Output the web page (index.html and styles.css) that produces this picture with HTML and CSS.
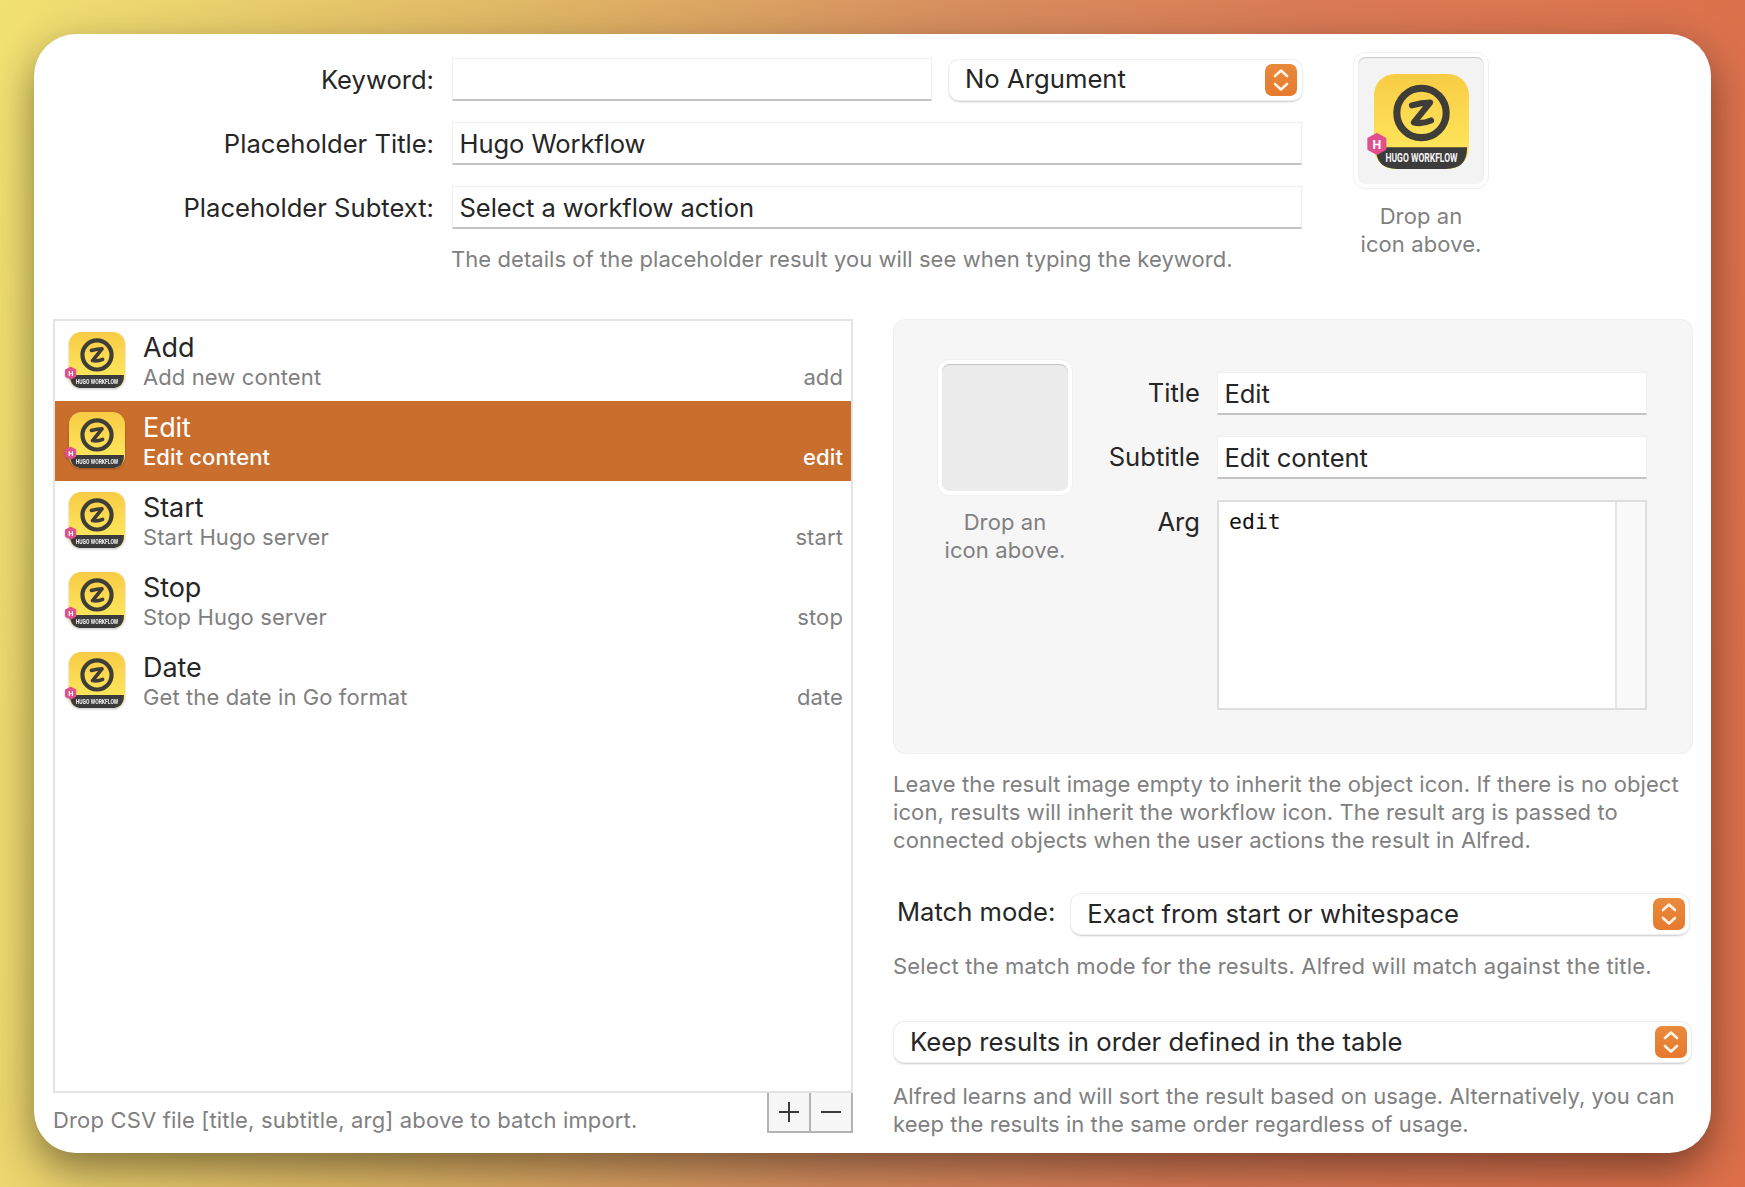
FILE: index.html
```html
<!DOCTYPE html>
<html lang="en">
<head>
    <meta charset="UTF-8">
    <title>Hugo Workflow - List Filter</title>
    <link rel="stylesheet" href="styles.css">
</head>
<body>
    <svg class="defs" width="0" height="0">
        <defs>
            <linearGradient id="iconYellow" x1="0" y1="0" x2="0" y2="1">
                <stop offset="0" stop-color="#f8cc45"/>
                <stop offset="1" stop-color="#ffec60"/>
            </linearGradient>
            <symbol id="appIcon" viewBox="0 0 100 100" overflow="visible">
                <rect x="0" y="0" width="100" height="100" rx="22" fill="url(#iconYellow)"/>
                <path d="M2 77H98V78Q98 100 76 100H24Q2 100 2 78Z" fill="#3d3c3c"/>
                <circle cx="50" cy="41" r="26" fill="none" stroke="#3f3d38" stroke-width="7.5"/>
                <path d="M40 33Q50 30 59 30L42 51Q51 53 60 49" fill="none" stroke="#3f3d38" stroke-width="6.500" stroke-linecap="round" stroke-linejoin="round"/>
                <text x="50" y="93" text-anchor="middle" textLength="76" lengthAdjust="spacingAndGlyphs" font-family="Roboto, sans-serif" font-weight="700" font-size="14" fill="#f4f4f4">HUGO WORKFLOW</text>
                <path d="M3 63L12 68V79L3 84L-6 79V68Z" fill="#e0508f" stroke="#e0508f" stroke-width="2" stroke-linejoin="round"/>
                <text x="3" y="79" text-anchor="middle" font-family="Roboto, sans-serif" font-weight="700" font-size="13" fill="#fff">H</text>
            </symbol>
            <symbol id="stepperArrows" viewBox="0 0 32 32">
                <path d="M10 12L16 6.5L22 12M10 20L16 25.500L22 20" fill="none" stroke="#fff3e6" stroke-width="2.600" stroke-linecap="round" stroke-linejoin="round"/>
            </symbol>
        </defs>
    </svg>

    <div class="window">
        <div class="top_section">
            <div class="top_form">
                <div class="field_label">Keyword:</div>
                <div class="keyword_row">
                    <div class="text_field keyword_field"></div>
                    <div class="select_box argument_select">
                        <span>No Argument</span>
                        <span class="stepper"><svg><use href="#stepperArrows"/></svg></span>
                    </div>
                </div>
                <div class="field_label">Placeholder Title:</div>
                <div class="text_field">Hugo Workflow</div>
                <div class="field_label">Placeholder Subtext:</div>
                <div class="text_field">Select a workflow action</div>
                <div class="help_text top_help">The details of the placeholder result you will see when typing the keyword.</div>
            </div>
            <div class="icon_column">
                <div class="icon_well">
                    <div class="icon_well_inner">
                        <svg class="well_icon"><use href="#appIcon"/></svg>
                    </div>
                </div>
                <div class="help_text icon_caption">Drop an<br>icon above.</div>
            </div>
        </div>

        <div class="main_section">
            <div class="left_column">
                <ul class="result_list">
                    <li class="result_row">
                        <svg class="row_icon"><use href="#appIcon"/></svg>
                        <div class="row_text">
                            <div class="row_title">Add</div>
                            <div class="row_subtitle">Add new content</div>
                        </div>
                        <div class="row_arg">add</div>
                    </li>
                    <li class="result_row selected">
                        <svg class="row_icon"><use href="#appIcon"/></svg>
                        <div class="row_text">
                            <div class="row_title">Edit</div>
                            <div class="row_subtitle">Edit content</div>
                        </div>
                        <div class="row_arg">edit</div>
                    </li>
                    <li class="result_row">
                        <svg class="row_icon"><use href="#appIcon"/></svg>
                        <div class="row_text">
                            <div class="row_title">Start</div>
                            <div class="row_subtitle">Start Hugo server</div>
                        </div>
                        <div class="row_arg">start</div>
                    </li>
                    <li class="result_row">
                        <svg class="row_icon"><use href="#appIcon"/></svg>
                        <div class="row_text">
                            <div class="row_title">Stop</div>
                            <div class="row_subtitle">Stop Hugo server</div>
                        </div>
                        <div class="row_arg">stop</div>
                    </li>
                    <li class="result_row">
                        <svg class="row_icon"><use href="#appIcon"/></svg>
                        <div class="row_text">
                            <div class="row_title">Date</div>
                            <div class="row_subtitle">Get the date in Go format</div>
                        </div>
                        <div class="row_arg">date</div>
                    </li>
                </ul>
                <div class="list_footer">
                    <div class="help_text footer_text">Drop CSV file [title, subtitle, arg] above to batch import.</div>
                    <div class="list_buttons">
                        <div class="list_button">
                            <svg width="22" height="22" viewBox="0 0 22 22"><path d="M1 11H21M11 1V21" stroke="#3a3a3a" stroke-width="2"/></svg>
                        </div>
                        <div class="list_button">
                            <svg width="22" height="22" viewBox="0 0 22 22"><path d="M1 11H21" stroke="#3a3a3a" stroke-width="2"/></svg>
                        </div>
                    </div>
                </div>
            </div>

            <div class="right_column">
                <div class="detail_panel">
                    <div class="detail_icon">
                        <div class="icon_well">
                            <div class="icon_well_inner empty"></div>
                        </div>
                        <div class="help_text icon_caption">Drop an<br>icon above.</div>
                    </div>
                    <div class="detail_form">
                        <div class="field_label">Title</div>
                        <div class="text_field">Edit</div>
                        <div class="field_label">Subtitle</div>
                        <div class="text_field">Edit content</div>
                        <div class="field_label arg_label">Arg</div>
                        <div class="arg_area">
                            <div class="arg_text">edit</div>
                            <div class="arg_scrollbar"></div>
                        </div>
                    </div>
                </div>

                <div class="help_text result_help">Leave the result image empty to inherit the object icon. If there is no object icon, results will inherit the workflow icon. The result arg is passed to connected objects when the user actions the result in Alfred.</div>

                <div class="match_row">
                    <div class="field_label match_label">Match mode:</div>
                    <div class="select_box match_select">
                        <span>Exact from start or whitespace</span>
                        <span class="stepper"><svg><use href="#stepperArrows"/></svg></span>
                    </div>
                </div>
                <div class="help_text match_help">Select the match mode for the results. Alfred will match against the title.</div>

                <div class="select_box order_select">
                    <span>Keep results in order defined in the table</span>
                    <span class="stepper"><svg><use href="#stepperArrows"/></svg></span>
                </div>
                <div class="help_text order_help">Alfred learns and will sort the result based on usage. Alternatively, you can keep the results in the same order regardless of usage.</div>
            </div>
        </div>
    </div>
</body>
</html>
```

FILE: styles.css
```css
* {
    box-sizing: border-box;
}

html, body {
    height: 100%;
}

body {
    margin: 0;
    padding: 34px;
    overflow: hidden;
    font-family: Inter, 'Noto Sans', sans-serif;
    color: #262626;
    background: linear-gradient(97deg, #f1e172 0%, #dfb765 28%, #d78f5f 50%, #d97a54 70%, #dc6f4a 100%);
}

.defs {
    position: absolute;
}

.window {
    width: 1677px;
    height: 1119px;
    padding: 18px 18px 0 19px;
    background: #ffffff;
    border-radius: 42px;
    box-shadow: 0 16px 40px rgba(0, 0, 0, 0.44);
}

/* shared controls */
.field_label {
    font-size: 25.6px;
    line-height: 42px;
    text-align: right;
}

.top_form .field_label {
    line-height: 44px;
}

.text_field {
    height: 43px;
    padding: 0 6.5px;
    font-size: 25.6px;
    line-height: 42px;
    background: #ffffff;
    border: 1px solid #efefef;
    border-bottom: 2px solid #c4c4c4;
    letter-spacing: -0.1px;
}

.help_text {
    font-size: 22px;
    line-height: 28px;
    color: #808080;
    letter-spacing: 0.1px;
}

.select_box {
    display: flex;
    align-items: center;
    justify-content: space-between;
    height: 40px;
    padding: 0 4px 0 16px;
    font-size: 25.7px;
    background: #ffffff;
    border-radius: 10px;
    box-shadow: 0 0 0 1px #eeeeee, 0 2px 2px rgba(0, 0, 0, 0.22);
}

.select_box > span:first-child {
    margin-bottom: 2px;
}

.stepper {
    width: 32px;
    height: 32px;
    border-radius: 7px;
    background: linear-gradient(#e98a3c, #e67a2f);
}

.stepper svg {
    display: block;
    width: 32px;
    height: 32px;
}

.icon_well {
    width: 136px;
    height: 137px;
    padding: 4px;
    background: #ffffff;
    border: 1px solid #f0f0f0;
    border-radius: 12px;
}

.icon_well_inner {
    display: flex;
    align-items: center;
    justify-content: center;
    height: 100%;
    background: #f3f3f3;
    border-radius: 8px;
    box-shadow: inset 0 1px 1px rgba(0, 0, 0, 0.18);
}

.icon_well_inner.empty {
    background: #ececec;
}

.icon_caption {
    margin-top: 12px;
    text-align: center;
}

.icon_column .icon_caption {
    margin-top: 13px;
}

/* top part */
.top_section {
    display: flex;
    height: 267px;
}

.top_form {
    display: grid;
    grid-template-columns: 381px 850px;
    grid-auto-rows: 43px;
    column-gap: 18px;
    row-gap: 21px;
    align-content: start;
    margin-top: 6px;
}

.keyword_row {
    display: flex;
    justify-content: space-between;
    align-items: flex-start;
}

.keyword_field {
    width: 480px;
}

.argument_select {
    width: 353px;
    margin-top: 2px;
    padding-right: 5px;
}

.argument_select > span:first-child {
    margin-bottom: 4px;
}

.top_help {
    grid-column: 2;
    margin-top: -5px;
    margin-left: -1px;
    white-space: nowrap;
    letter-spacing: 0.06px;
}

.icon_column {
    width: 136px;
    margin-left: 51px;
}

.well_icon {
    width: 95px;
    height: 95px;
    margin-top: 2px;
    overflow: visible;
}

/* results table */
.main_section {
    display: flex;
    gap: 40px;
}

.left_column, .right_column {
    width: 800px;
}

.result_list {
    height: 774px;
    margin: 0;
    padding: 0;
    list-style: none;
    border: 2px solid #e4e4e4;
}

.result_row {
    display: flex;
    align-items: flex-start;
    height: 80px;
    padding: 11px 8px 0 14px;
}

.result_row.selected {
    background: #c96e2d;
    color: #ffffff;
}

.row_icon {
    flex: none;
    width: 56px;
    height: 56px;
    overflow: visible;
    filter: drop-shadow(0 1px 1px rgba(0, 0, 0, 0.25));
}

.row_text {
    flex: 1;
    margin-left: 18px;
}

.row_title {
    font-size: 27px;
    line-height: 32px;
    letter-spacing: -0.1px;
}

.row_subtitle {
    font-size: 22px;
    line-height: 28px;
    margin-top: -1px;
    color: #808080;
    letter-spacing: 0.1px;
}

.row_arg {
    align-self: flex-start;
    margin-top: 31px;
    font-size: 22px;
    line-height: 28px;
    color: #808080;
    letter-spacing: 0.1px;
}

.selected .row_subtitle, .selected .row_arg {
    color: #ffffff;
    font-weight: 500;
}

.list_footer {
    display: flex;
    justify-content: space-between;
}

.footer_text {
    margin-top: 13px;
    letter-spacing: 0.16px;
}

.list_buttons {
    display: flex;
    width: 86px;
    height: 40px;
    border: 2px solid #b4b4b4;
    border-top: 0;
    background: #f7f7f7;
}

.list_button {
    display: flex;
    align-items: center;
    justify-content: center;
    flex: 1;
}

.list_button + .list_button {
    border-left: 2px solid #b4b4b4;
}

/* right side */
.detail_panel {
    display: flex;
    height: 435px;
    padding: 39px 45px 0 43px;
    background: #f6f6f6;
    border: 1px solid #efefef;
    border-radius: 12px;
}

.detail_icon {
    width: 136px;
}

.detail_form {
    display: grid;
    grid-template-columns: 111px 430px;
    grid-template-rows: 43px 43px 210px;
    column-gap: 17px;
    row-gap: 21px;
    margin-top: 13px;
    margin-left: 16px;
}

.arg_label {
    line-height: 44px;
}

.arg_area {
    display: flex;
    background: #ffffff;
    border: 2px solid #dedede;
}

.arg_text {
    flex: 1;
    padding: 7px 10px;
    font-family: 'DejaVu Sans Mono', monospace;
    font-size: 21.5px;
    color: #111111;
}

.arg_scrollbar {
    width: 30px;
    background: #f9f9f9;
    border-left: 2px solid #e6e6e6;
}

.result_help {
    margin-top: 16px;
}

.match_row {
    display: flex;
    margin-top: 40px;
}

.match_label {
    line-height: 36px;
    margin-left: 4px;
}

.match_select {
    width: 618px;
    margin-left: 16px;
}

.match_help {
    margin-top: 18px;
    letter-spacing: 0.16px;
}

.order_select {
    margin-top: 42px;
    margin-left: 1px;
    width: 797px;
}

.order_help {
    margin-top: 20px;
    letter-spacing: 0.06px;
}
```
